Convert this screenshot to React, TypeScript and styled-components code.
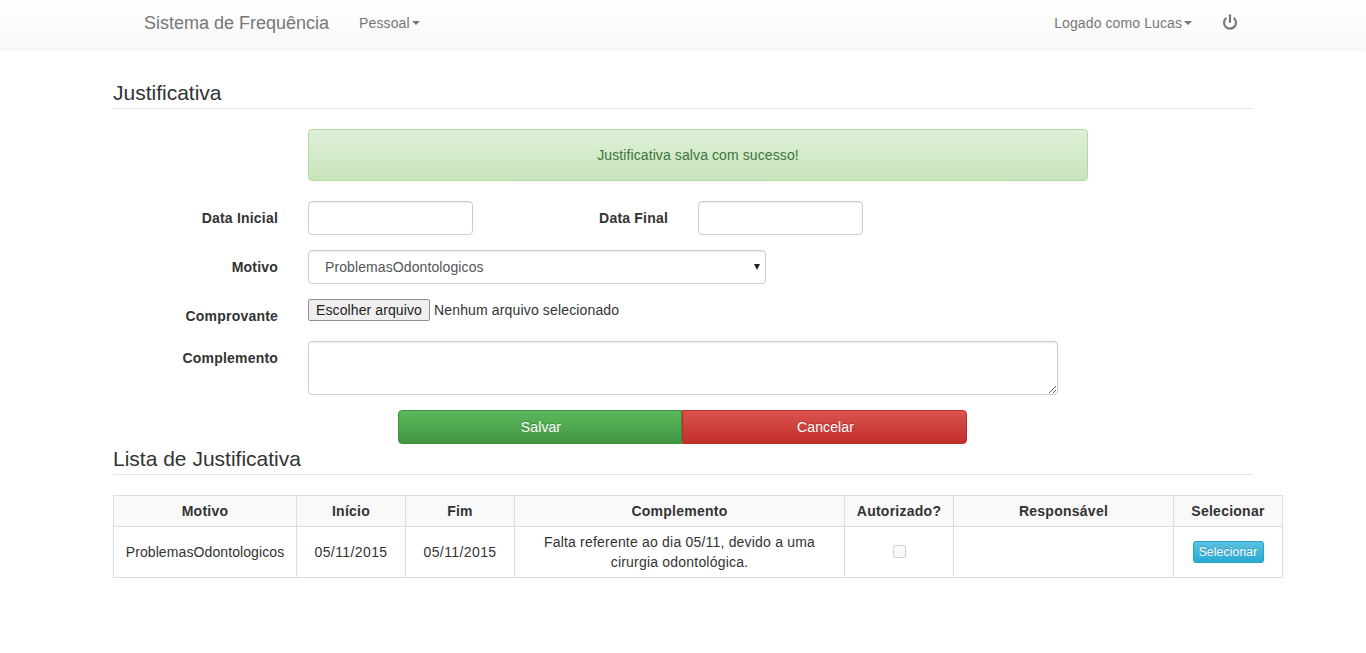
import React from 'react';
import styled, { createGlobalStyle } from 'styled-components';
import { Power } from 'lucide-react';

const GlobalStyle = createGlobalStyle`
  * {
    box-sizing: border-box;
  }

  html, body {
    margin: 0;
    padding: 0;
    background: #fff;
    color: #333;
    font-family: "Liberation Sans", Arial, sans-serif;
    font-size: 14px;
    line-height: 20px;
  }
`;

// Navbar
const Navbar = styled.nav`
  height: 48px;
  padding: 0 128px 3px 144px;
  display: flex;
  align-items: center;
  background: linear-gradient(to bottom, #fff 0%, #f8f8f8 100%);
  box-shadow: 0 1px 5px rgba(0, 0, 0, 0.08);
  color: #777;
`;

const Brand = styled.a`
  font-size: 18px;
  margin-right: 30px;
`;

const NavItem = styled.a`
  display: flex;
  align-items: center;
  font-size: 14px;
  letter-spacing: 0.1px;
`;

const Caret = styled.span`
  margin-left: 2px;
  width: 0;
  height: 0;
  border-top: 4px solid #777;
  border-left: 4px solid transparent;
  border-right: 4px solid transparent;
`;

const NavRight = styled.div`
  margin-left: auto;
  display: flex;
  align-items: center;
  gap: 30px;
`;

const PowerLink = styled.a`
  display: flex;
  margin-top: -2px;
  color: #777;
`;

// Page
const Page = styled.main`
  padding: 30px 0 0 113px;
`;

const SectionTitle = styled.h2`
  width: 1140px;
  margin: 0;
  font-size: 21px;
  font-weight: 400;
  line-height: 29px;
  padding-bottom: 1px;
  border-bottom: 1px solid #e5e5e5;
`;

const Alert = styled.div`
  width: 780px;
  height: 52px;
  margin: 20px 0 20px 195px;
  display: flex;
  align-items: center;
  justify-content: center;
  border: 1px solid #b2dba1;
  border-radius: 4px;
  background: linear-gradient(to bottom, #dff0d8 0%, #c8e5bc 100%);
  color: #3c763d;
  letter-spacing: 0.1px;
`;

const Row = styled.div<{ $mb: number }>`
  display: flex;
  align-items: flex-start;
  margin-bottom: ${(p) => p.$mb}px;
`;

const Label = styled.label<{ $w?: number }>`
  flex: none;
  width: ${(p) => p.$w ?? 165}px;
  margin-right: 30px;
  padding-top: 7px;
  text-align: right;
  font-weight: 700;
  letter-spacing: 0.2px;
`;

const control = `
  height: 34px;
  padding: 6px 12px;
  border: 1px solid #ccc;
  border-radius: 4px;
  background: #fff;
  color: #555;
  font-family: inherit;
  font-size: 14px;
  box-shadow: inset 0 1px 1px rgba(0, 0, 0, 0.075);
`;

const TextInput = styled.input`
  ${control}
  width: 165px;
`;

const SelectWrap = styled.div`
  position: relative;
  width: 458px;

  &::after {
    content: '';
    position: absolute;
    top: 14px;
    right: 6px;
    border-top: 6px solid #222;
    border-left: 3.5px solid transparent;
    border-right: 3.5px solid transparent;
    pointer-events: none;
  }
`;

const Select = styled.select`
  ${control}
  display: block;
  width: 100%;
  padding-left: 16px;
  appearance: none;
  letter-spacing: 0.1px;
`;

const Textarea = styled.textarea`
  ${control}
  display: block;
  width: 750px;
  height: 54px;
`;

const FileWrap = styled.div`
  display: flex;
  align-items: center;
  height: 22px;
  gap: 4px;
  color: #333;
  letter-spacing: 0.15px;
`;

const FileButton = styled.button`
  height: 22px;
  width: 122px;
  padding: 0;
  border: 1px solid #8f8f8f;
  border-radius: 2px;
  background: #efefef;
  color: #222;
  font-family: inherit;
  font-size: 14px;
  letter-spacing: 0.1px;
`;

const ButtonRow = styled.div`
  display: flex;
  margin: 15px 0 0 285px;
`;

const ActionButton = styled.button<{ $from: string; $to: string; $border: string; $side: 'left' | 'right' }>`
  width: ${(p) => (p.$side === 'left' ? 284 : 285)}px;
  height: 34px;
  padding: 0 0 0 2px;
  border: 1px solid ${(p) => p.$border};
  border-radius: ${(p) => (p.$side === 'left' ? '4px 0 0 4px' : '0 4px 4px 0')};
  background: linear-gradient(to bottom, ${(p) => p.$from} 0%, ${(p) => p.$to} 100%);
  color: #fff;
  font-family: inherit;
  font-size: 14px;
  letter-spacing: 0.1px;
  text-shadow: 0 -1px 0 rgba(0, 0, 0, 0.2);
`;

// Table
const Table = styled.table`
  margin-top: 20px;
  width: 1170px;
  table-layout: fixed;
  border-collapse: collapse;
  text-align: center;
`;

const Th = styled.th`
  height: 31px;
  padding: 0 8px;
  border: 1px solid #ddd;
  background: #f9f9f9;
  font-weight: 700;
  letter-spacing: 0.25px;
`;

const Td = styled.td<{ $spacing?: number }>`
  height: 51px;
  padding: 5px 8px;
  border: 1px solid #ddd;
  letter-spacing: ${(p) => p.$spacing ?? 0.1}px;
`;

const Check = styled.input`
  display: block;
  width: 13px;
  height: 13px;
  margin: -2px auto 0;
`;

const SelectButton = styled.button`
  display: block;
  width: 71px;
  height: 22px;
  margin: 0 auto;
  padding: 0;
  border: 1px solid #28a4c9;
  border-radius: 3px;
  background: linear-gradient(to bottom, #5bc0de 0%, #2aabd2 100%);
  color: #fff;
  font-family: inherit;
  font-size: 12px;
  letter-spacing: 0.2px;
  text-shadow: 0 -1px 0 rgba(0, 0, 0, 0.2);
`;

const columns = [
  { title: 'Motivo', width: 183 },
  { title: 'Início', width: 109 },
  { title: 'Fim', width: 109 },
  { title: 'Complemento', width: 330 },
  { title: 'Autorizado?', width: 109 },
  { title: 'Responsável', width: 220 },
  { title: 'Selecionar', width: 109 },
];

export default function App() {
  return (
    <>
      <GlobalStyle />
      <Navbar>
        <Brand>Sistema de Frequência</Brand>
        <NavItem>
          Pessoal
          <Caret />
        </NavItem>
        <NavRight>
          <NavItem>
            Logado como Lucas
            <Caret />
          </NavItem>
          <PowerLink>
            <Power size={16} strokeWidth={3.2} />
          </PowerLink>
        </NavRight>
      </Navbar>

      <Page>
        <SectionTitle>Justificativa</SectionTitle>
        <Alert>Justificativa salva com sucesso!</Alert>

        <Row $mb={15}>
          <Label>Data Inicial</Label>
          <TextInput />
          <Label $w={195}>Data Final</Label>
          <TextInput />
        </Row>
        <Row $mb={15}>
          <Label>Motivo</Label>
          <SelectWrap>
            <Select defaultValue="ProblemasOdontologicos">
              <option>ProblemasOdontologicos</option>
            </Select>
          </SelectWrap>
        </Row>
        <Row $mb={15}>
          <Label>Comprovante</Label>
          <FileWrap>
            <FileButton type="button">Escolher arquivo</FileButton>
            Nenhum arquivo selecionado
          </FileWrap>
        </Row>
        <Row $mb={0}>
          <Label>Complemento</Label>
          <Textarea />
        </Row>
        <ButtonRow>
          <ActionButton $side="left" $from="#5cb85c" $to="#419641" $border="#3e8f3e">
            Salvar
          </ActionButton>
          <ActionButton $side="right" $from="#d9534f" $to="#c12e2a" $border="#b92c28">
            Cancelar
          </ActionButton>
        </ButtonRow>

        <SectionTitle>Lista de Justificativa</SectionTitle>
        <Table>
          <colgroup>
            {columns.map((c) => (
              <col key={c.title} width={c.width} />
            ))}
          </colgroup>
          <thead>
            <tr>
              {columns.map((c) => (
                <Th key={c.title}>{c.title}</Th>
              ))}
            </tr>
          </thead>
          <tbody>
            <tr>
              <Td>ProblemasOdontologicos</Td>
              <Td $spacing={0.4}>05/11/2015</Td>
              <Td $spacing={0.4}>05/11/2015</Td>
              <Td $spacing={0.2}>
                Falta referente ao dia 05/11, devido a uma
                <br />
                cirurgia odontológica.
              </Td>
              <Td>
                <Check type="checkbox" disabled />
              </Td>
              <Td />
              <Td>
                <SelectButton type="button">Selecionar</SelectButton>
              </Td>
            </tr>
          </tbody>
        </Table>
      </Page>
    </>
  );
}
